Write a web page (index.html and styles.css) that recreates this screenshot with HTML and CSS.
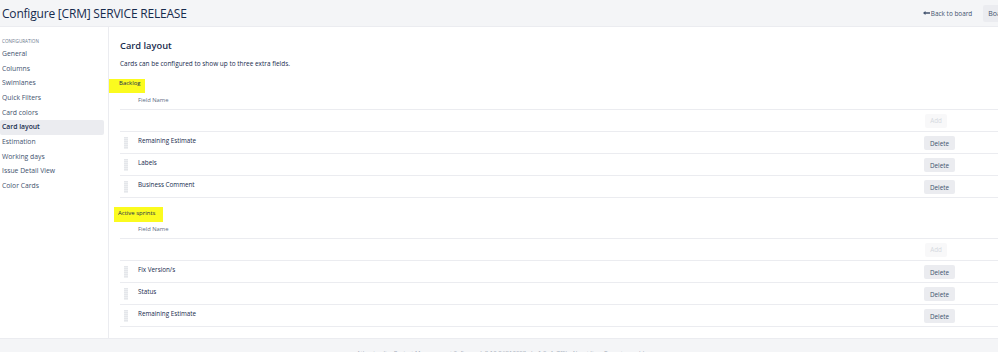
FILE: index.html
```html
<!DOCTYPE html>
<html lang="en">
<head>
    <meta charset="utf-8">
    <title>Configure [CRM] SERVICE RELEASE</title>
    <link rel="stylesheet" href="styles.css">
</head>
<body>

    <div class="top-header">
        <h1>Configure [CRM] SERVICE RELEASE</h1>
        <div class="header-actions">
            <a class="back-link" href="#">
                <svg width="7" height="4" viewBox="0 0 7 4"><path d="M0 2 L2.5 0 V1.2 H7 V2.8 H2.5 V4 Z" fill="#42526e"/></svg>Back to board
            </a>
            <button class="board-btn">Board</button>
        </div>
    </div>

    <div class="page">
        <div class="sidebar">
            <div class="side-title">Configuration</div>
            <a class="side-item" href="#">General</a>
            <a class="side-item" href="#">Columns</a>
            <a class="side-item" href="#">Swimlanes</a>
            <a class="side-item" href="#">Quick Filters</a>
            <a class="side-item" href="#">Card colors</a>
            <a class="side-item selected" href="#">Card layout</a>
            <a class="side-item" href="#">Estimation</a>
            <a class="side-item" href="#">Working days</a>
            <a class="side-item" href="#">Issue Detail View</a>
            <a class="side-item" href="#">Color Cards</a>
        </div>

        <div class="content">
            <h2>Card layout</h2>
            <p class="intro">Cards can be configured to show up to three extra fields.</p>

            <div class="section-label"><span class="marker">Backlog</span></div>
            <div class="fields">
                <div class="field-head">Field Name</div>
                <div class="field-row add-row">
                    <span class="handle blank"></span>
                    <span class="field-name"></span>
                    <span class="action"><button class="btn add" disabled>Add</button></span>
                </div>
                <div class="field-row">
                    <span class="handle"></span>
                    <span class="field-name">Remaining Estimate</span>
                    <span class="action"><button class="btn">Delete</button></span>
                </div>
                <div class="field-row">
                    <span class="handle"></span>
                    <span class="field-name">Labels</span>
                    <span class="action"><button class="btn">Delete</button></span>
                </div>
                <div class="field-row">
                    <span class="handle"></span>
                    <span class="field-name">Business Comment</span>
                    <span class="action"><button class="btn">Delete</button></span>
                </div>
            </div>

            <div class="section-label second"><span class="marker">Active sprints</span></div>
            <div class="fields">
                <div class="field-head">Field Name</div>
                <div class="field-row add-row">
                    <span class="handle blank"></span>
                    <span class="field-name"></span>
                    <span class="action"><button class="btn add" disabled>Add</button></span>
                </div>
                <div class="field-row">
                    <span class="handle"></span>
                    <span class="field-name">Fix Version/s</span>
                    <span class="action"><button class="btn">Delete</button></span>
                </div>
                <div class="field-row">
                    <span class="handle"></span>
                    <span class="field-name">Status</span>
                    <span class="action"><button class="btn">Delete</button></span>
                </div>
                <div class="field-row">
                    <span class="handle"></span>
                    <span class="field-name">Remaining Estimate</span>
                    <span class="action"><button class="btn">Delete</button></span>
                </div>
            </div>
        </div>
    </div>

    <div class="footer">
        Atlassian Jira Project Management Software (v8.13.8#813008-sha1:0a4e7f2) &middot; About Jira &middot; Report a problem
    </div>

</body>
</html>
```

FILE: styles.css
```css
body {
    margin: 0;
    font-family: "Open Sans", "Noto Sans", sans-serif;
    color: #172b4d;
    background: #fff;
    overflow: hidden;
}

a {
    text-decoration: none;
    color: inherit;
}

.top-header {
    height: 26px;
    background: #f4f5f7;
    border-bottom: 1px solid #ebecf0;
    display: flex;
    align-items: center;
    justify-content: space-between;
    padding-left: 2px;
}

.top-header h1 {
    margin: 0;
    font-size: 12px;
    font-weight: 400;
    color: #172b4d;
    letter-spacing: -0.2px;
}

.header-actions {
    display: flex;
    align-items: center;
    gap: 11px;
    margin-right: -15px;
}

.back-link {
    font-size: 6.4px;
    color: #42526e;
    display: flex;
    align-items: center;
    gap: 1px;
}

.board-btn {
    background: #ebecf0;
    border: 0;
    border-radius: 2px;
    font-family: inherit;
    font-size: 7px;
    color: #42526e;
    padding: 4px 5px;
}

.page {
    display: flex;
    height: 311px;
}

.sidebar {
    width: 104px;
    padding: 10px 4px 0 0;
    border-right: 1px solid #ebecf0;
    display: flex;
    flex-direction: column;
}

.side-title {
    font-size: 4.6px;
    text-transform: uppercase;
    color: #6b778c;
    line-height: 8px;
    padding-left: 2px;
    margin-bottom: 2px;
}

.side-item {
    font-size: 6.8px;
    color: #42526e;
    line-height: 14.65px;
    padding-left: 2px;
    border-radius: 2px;
}

.side-item.selected {
    background: #ebecf0;
    color: #172b4d;
    font-weight: 600;
}

.content {
    flex: 1;
    padding: 12px 0 0 11px;
}

.content h2 {
    margin: 0;
    font-size: 9.3px;
    line-height: 14px;
    font-weight: 600;
    color: #172b4d;
}

.intro {
    margin: 6px 0 0;
    font-size: 6.45px;
    line-height: 10px;
    color: #172b4d;
}

.section-label {
    margin: 10px 0 0 -11px;
    line-height: 0;
}

.section-label.second {
    margin-top: 9px;
    margin-left: -6px;
}

.marker {
    display: inline-block;
    background: #fbfb1f;
    font-size: 6px;
    line-height: 9px;
    padding: 0 4px 5px 10px;
    color: #172b4d;
}

.second .marker {
    padding: 2px 8px 4px 4px;
}

.field-head {
    height: 16px;
    line-height: 14px;
    padding-left: 18px;
    font-size: 5.8px;
    color: #5e6c84;
    border-bottom: 1px solid #ebecf0;
}

.field-row {
    height: 21px;
    display: flex;
    align-items: center;
    border-bottom: 1px solid #ebecf0;
}

.handle {
    width: 4px;
    height: 12px;
    margin: 0 10px 0 4px;
    background: repeating-linear-gradient(to bottom, #e4e6ea 0 1px, #eef0f2 1px 2px);
}

.handle.blank {
    background: none;
}

.field-name {
    flex: 1;
    font-size: 6.3px;
    color: #172b4d;
    margin-top: -4px;
}

.action {
    width: 74px;
    display: flex;
    align-items: center;
}

.btn {
    background: #ebecf0;
    border: 0;
    border-radius: 2px;
    font-family: inherit;
    font-size: 6.3px;
    color: #42526e;
    height: 14px;
    width: 31px;
    padding: 0;
    margin-top: 1px;
}

.btn.add {
    background: #f8f8f9;
    color: #d5d9df;
    width: 22px;
    margin-left: 1px;
    margin-top: 0;
}

.footer {
    height: 20px;
    background: #f4f5f7;
    border-top: 1px solid #ebecf0;
    font-size: 6px;
    color: #a5adba;
    text-align: center;
    padding-top: 10px;
    padding-left: 12px;
}
```
